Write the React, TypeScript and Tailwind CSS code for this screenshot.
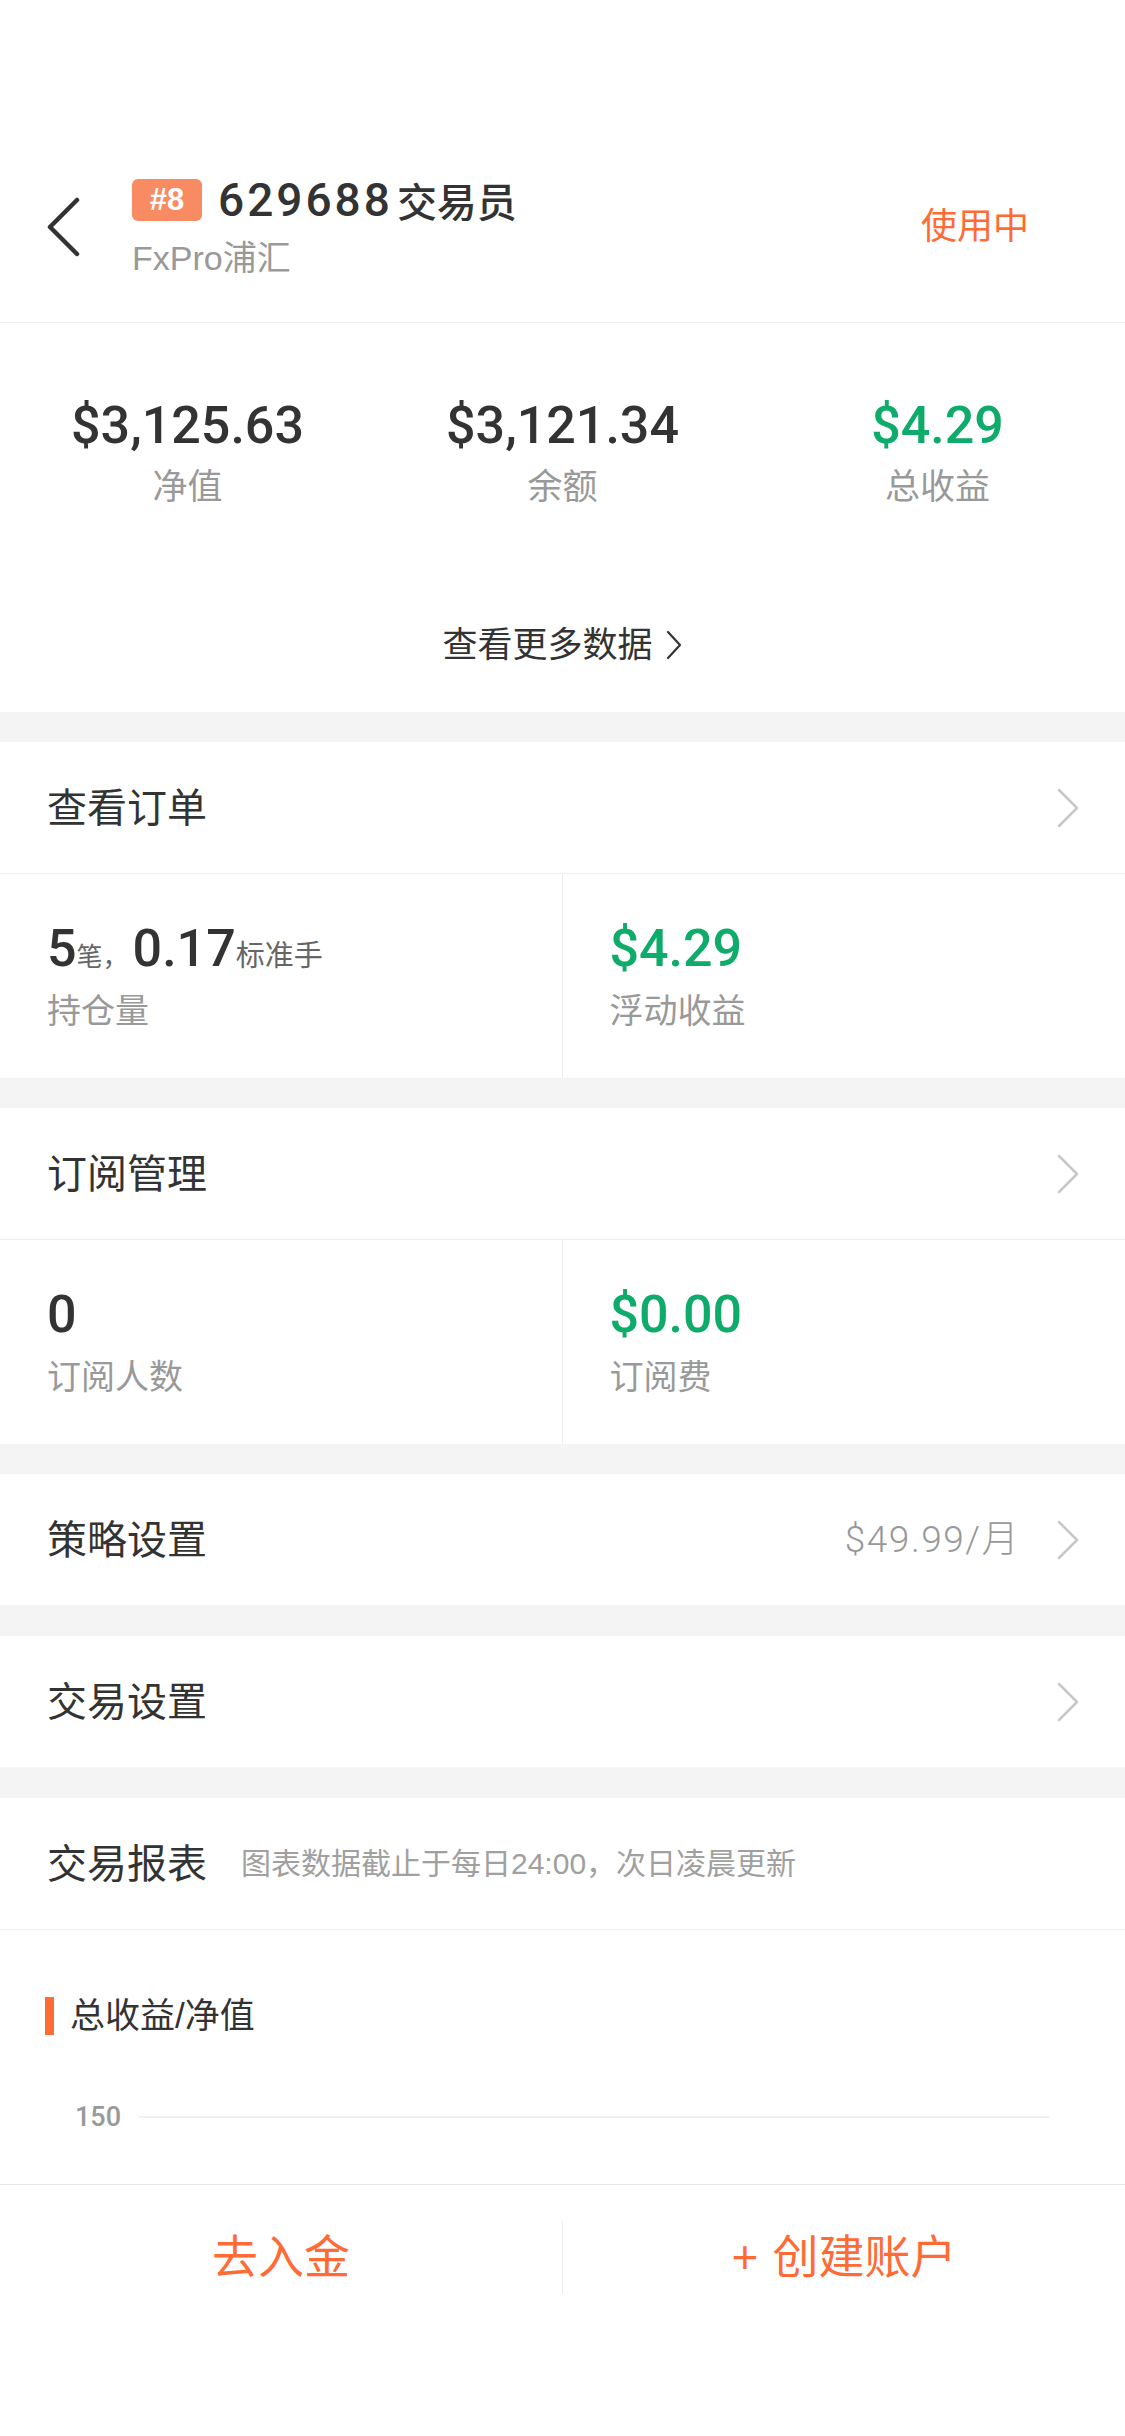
import type { ReactNode } from "react";

const orange = "text-[#FF6B35]";

function BackIcon() {
  return (
    <svg width="36" height="62" viewBox="0 0 36 62" fill="none">
      <polyline points="32,4 5,31 32,58" stroke="#333333" strokeWidth="4.5" strokeLinecap="round" strokeLinejoin="round" />
    </svg>
  );
}

function RowChevron() {
  return (
    <svg width="24" height="40" viewBox="0 0 24 40" fill="none">
      <polyline points="3,2 21,20 3,38" stroke="#C8C8C8" strokeWidth="2.5" strokeLinecap="round" strokeLinejoin="round" />
    </svg>
  );
}

function SmallChevron() {
  return (
    <svg width="18" height="30" viewBox="0 0 18 30" fill="none">
      <polyline points="3,2 15,15 3,28" stroke="#333333" strokeWidth="2.2" strokeLinecap="round" strokeLinejoin="round" />
    </svg>
  );
}

function Band({ tall }: { tall?: boolean }) {
  return <div className={tall ? "h-[31px] bg-[#F4F4F4]" : "h-[30px] bg-[#F4F4F4]"} />;
}

function Row({ title, right, border }: { title: string; right?: ReactNode; border?: boolean }) {
  return (
    <div
      className={
        border
          ? "flex h-[132px] items-center justify-between border-b border-[#EEEEEE] pl-[47px] pr-[45px]"
          : "flex h-[131px] items-center justify-between pl-[47px] pr-[45px]"
      }
    >
      <span className="text-[40px] leading-[48px] text-[#333]">{title}</span>
      <div className="flex items-center gap-[36px]">
        {right}
        <RowChevron />
      </div>
    </div>
  );
}

function Cell({ value, label, left }: { value: ReactNode; label: string; left?: boolean }) {
  return (
    <div className={left ? "flex h-[204px] flex-col justify-center border-r border-[#EEEEEE] pl-[47px]" : "flex h-[204px] flex-col justify-center pl-[47px]"}>
      <div className="h-[60px] leading-[60px] whitespace-nowrap">{value}</div>
      <div className="mt-[10px] text-[34px] leading-[44px] text-[#999]">{label}</div>
    </div>
  );
}

function Stat({ value, label, green }: { value: string; label: string; green?: boolean }) {
  return (
    <div className="flex flex-col items-center">
      <div
        className={
          green
            ? "font-['Roboto',sans-serif] text-[52px] font-medium leading-[60px] text-[#0FAB6B]"
            : "font-['Roboto',sans-serif] text-[52px] font-medium leading-[60px] text-[#333]"
        }
      >
        {value}
      </div>
      <div className="mt-[9px] text-[35px] leading-[44px] text-[#999]">{label}</div>
    </div>
  );
}

export default function App() {
  return (
    <div className="min-h-screen w-full bg-white font-['Liberation_Sans','Noto_Sans_CJK_SC',sans-serif] text-[#333]">
      <div className="h-[132px]" />

      {/* header */}
      <header className="flex h-[191px] items-center border-b border-[#EEEEEE]">
        <div className="flex w-[132px] pl-[45px]">
          <BackIcon />
        </div>
        <div className="flex flex-1 flex-col">
          <div className="flex h-[48px] items-center">
            <span className="flex h-[42px] w-[70px] items-center justify-center rounded-[6px] bg-[#F98B63] text-[31px] font-bold text-white">
              #8
            </span>
            <span className="ml-[16px] font-['Roboto',sans-serif] text-[46px] font-medium tracking-[3px] text-[#333]">629688</span>
            <span className="ml-[4px] font-['Noto_Sans_CJK_SC',sans-serif] text-[40px] font-medium text-[#333]">交易员</span>
          </div>
          <div className="mt-[14px] text-[34px] leading-[40px] text-[#999]">FxPro浦汇</div>
        </div>
        <div className={`pr-[96px] text-[36px] ${orange}`}>使用中</div>
      </header>

      {/* account stats */}
      <section className="pt-[73px] pb-[42px]">
        <div className="grid grid-cols-3">
          <Stat value="$3,125.63" label="净值" />
          <Stat value="$3,121.34" label="余额" />
          <Stat value="$4.29" label="总收益" green />
        </div>
        <div className="mt-[111px] flex h-[50px] items-center justify-center gap-[12px] text-[35px] text-[#333]">
          <span>查看更多数据</span>
          <SmallChevron />
        </div>
      </section>

      <Band />
      <Row title="查看订单" border />
      <div className="grid grid-cols-2">
        <Cell
          left
          value={
            <>
              <span className="font-['Roboto',sans-serif] text-[52px] font-medium text-[#333]">5</span>
              <span className="text-[26px] text-[#666]">笔，</span>
              <span className="ml-[4px] font-['Roboto',sans-serif] text-[52px] font-medium text-[#333]">0.17</span>
              <span className="text-[29px] text-[#666]">标准手</span>
            </>
          }
          label="持仓量"
        />
        <Cell value={<span className="font-['Roboto',sans-serif] text-[52px] font-medium text-[#0FAB6B]">$4.29</span>} label="浮动收益" />
      </div>

      <Band />
      <Row title="订阅管理" border />
      <div className="grid grid-cols-2">
        <Cell left value={<span className="font-['Roboto',sans-serif] text-[52px] font-medium text-[#333]">0</span>} label="订阅人数" />
        <Cell value={<span className="font-['Roboto',sans-serif] text-[52px] font-medium text-[#0FAB6B]">$0.00</span>} label="订阅费" />
      </div>

      <Band />
      <Row
        title="策略设置"
        right={
          <span className="font-['Roboto','Noto_Sans_CJK_SC',sans-serif] text-[37px] font-light tracking-[1.5px] text-[#999]">
            $49.99/月
          </span>
        }
      />
      <Band tall />
      <Row title="交易设置" />
      <Band tall />

      {/* report */}
      <div className="flex h-[132px] items-center border-b border-[#EEEEEE] pl-[47px]">
        <span className="text-[40px] leading-[48px] text-[#333]">交易报表</span>
        <span className="ml-[34px] text-[30px] text-[#A0A0A0]">图表数据截止于每日24:00，次日凌晨更新</span>
      </div>
      <div className="h-[254px] pt-[63px]">
        <div className="flex h-[46px] items-center pl-[45px]">
          <div className="h-[38px] w-[9px] bg-[#FF6B35]" />
          <span className="ml-[16px] text-[35px] text-[#333]">总收益/净值</span>
        </div>
        <div className="mt-[63px] flex h-[30px] items-center pl-[75px] pr-[76px]">
          <span className="font-['Roboto',sans-serif] text-[27px] font-medium text-[#999]">150</span>
          <div className="ml-[18px] h-[2px] flex-1 bg-[#F0F0F0]" />
        </div>
      </div>

      {/* bottom actions */}
      <div className="flex h-[146px] items-center border-t border-[#E5E5E5]">
        <div className={`flex flex-1 justify-center text-[46px] ${orange}`}>去入金</div>
        <div className="h-[73px] w-px bg-[#EEEEEE]" />
        <div className={`flex flex-1 justify-center gap-[14px] text-[46px] ${orange}`}>
          <span>+</span>
          <span>创建账户</span>
        </div>
      </div>
    </div>
  );
}
